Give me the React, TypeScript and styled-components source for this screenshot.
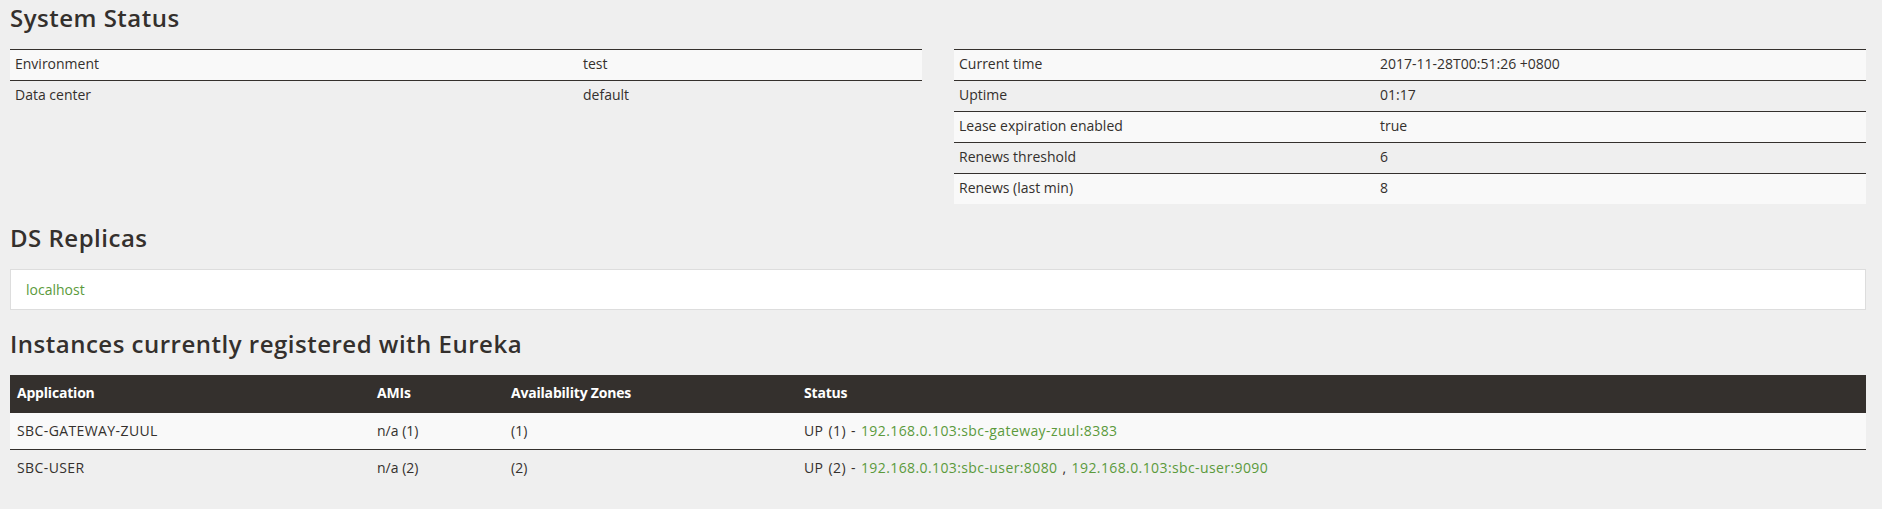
import React from 'react';
import styled, { createGlobalStyle } from 'styled-components';

const GlobalStyle = createGlobalStyle`
  body {
    margin: 0;
    background-color: #efefef;
    color: #34302d;
    font-family: "Open Sans", "Liberation Sans", sans-serif;
    font-size: 14px;
    line-height: 20px;
  }
`;

const StyledPage = styled.div`
  padding: 3px 16px 20px 10px;
`;

const StyledSection = styled.section`
  & + & {
    margin-top: 19px;
  }
`;

const StyledHeading = styled.h2`
  margin: 0 0 16px;
  font-size: 24px;
  line-height: 30px;
  font-weight: 600;
  letter-spacing: 0.5px;
`;

const StyledStatusGrid = styled.div`
  display: grid;
  grid-template-columns: 1fr 1fr;
  column-gap: 32px;
  align-items: start;
`;

const StyledTable = styled.table`
  width: 100%;
  border-collapse: collapse;
  table-layout: fixed;
`;

const StyledInfoRow = styled.tr`
  &:nth-child(odd) > td {
    background-color: #f9f9f9;
  }
`;

const StyledInfoCell = styled.td`
  padding: 4px 5px 6px;
  border-top: 1px solid #34302d;
  vertical-align: top;
`;

const StyledReplicaBox = styled.ul`
  margin: 0;
  padding: 10px 15px 9px;
  list-style: none;
  background-color: #ffffff;
  border: 1px solid #dddddd;
`;

const StyledLink = styled.a`
  color: #5b9a3c;
  text-decoration: none;
`;

const StyledHeadCell = styled.th`
  padding: 8px 7px;
  background-color: #34302d;
  color: #ffffff;
  font-weight: 700;
  text-align: left;
  letter-spacing: -0.2px;
  border-bottom: 2px solid #34302d;
`;

const StyledInstanceRow = styled.tr`
  &:nth-child(odd) > td {
    background-color: #f9f9f9;
  }
`;

const StyledInstanceCell = styled.td<{ $wide?: boolean }>`
  padding: 8px 7px;
  border-top: 1px solid #34302d;
  vertical-align: top;
  letter-spacing: ${ ({ $wide }) => ($wide ? '0.4px' : 'normal') };
  word-spacing: ${ ({ $wide }) => ($wide ? '1px' : 'normal') };
`;

type InfoItem = { label: string; value: string };

const leftInfo: InfoItem[] = [
  { label: 'Environment', value: 'test' },
  { label: 'Data center', value: 'default' },
];

const rightInfo: InfoItem[] = [
  { label: 'Current time', value: '2017-11-28T00:51:26 +0800' },
  { label: 'Uptime', value: '01:17' },
  { label: 'Lease expiration enabled', value: 'true' },
  { label: 'Renews threshold', value: '6' },
  { label: 'Renews (last min)', value: '8' },
];

const instances = [
  {
    name: 'SBC-GATEWAY-ZUUL',
    amis: 'n/a (1)',
    zones: '(1)',
    status: 'UP (1)',
    links: ['192.168.0.103:sbc-gateway-zuul:8383'],
  },
  {
    name: 'SBC-USER',
    amis: 'n/a (2)',
    zones: '(2)',
    status: 'UP (2)',
    links: ['192.168.0.103:sbc-user:8080', '192.168.0.103:sbc-user:9090'],
  },
];

const InfoTable = ({ items, keyWidth }: { items: InfoItem[]; keyWidth: number }) => (
  <StyledTable>
    <colgroup>
      <col style={ { width: keyWidth } } />
      <col />
    </colgroup>
    <tbody>
      {items.map((item) => (
        <StyledInfoRow key={ item.label }>
          <StyledInfoCell>{item.label}</StyledInfoCell>
          <StyledInfoCell>{item.value}</StyledInfoCell>
        </StyledInfoRow>
      ))}
    </tbody>
  </StyledTable>
);

const App = () => (
  <StyledPage>
    <GlobalStyle />
    <StyledSection>
      <StyledHeading>System Status</StyledHeading>
      <StyledStatusGrid>
        <InfoTable items={ leftInfo } keyWidth={ 568 } />
        <InfoTable items={ rightInfo } keyWidth={ 421 } />
      </StyledStatusGrid>
    </StyledSection>
    <StyledSection>
      <StyledHeading>DS Replicas</StyledHeading>
      <StyledReplicaBox>
        <li>
          <StyledLink href="#">localhost</StyledLink>
        </li>
      </StyledReplicaBox>
    </StyledSection>
    <StyledSection>
      <StyledHeading>Instances currently registered with Eureka</StyledHeading>
      <StyledTable>
        <colgroup>
          <col style={ { width: 360 } } />
          <col style={ { width: 134 } } />
          <col style={ { width: 293 } } />
          <col />
        </colgroup>
        <thead>
          <tr>
            <StyledHeadCell>Application</StyledHeadCell>
            <StyledHeadCell>AMIs</StyledHeadCell>
            <StyledHeadCell>Availability Zones</StyledHeadCell>
            <StyledHeadCell>Status</StyledHeadCell>
          </tr>
        </thead>
        <tbody>
          {instances.map((instance) => (
            <StyledInstanceRow key={ instance.name }>
              <StyledInstanceCell $wide>{instance.name}</StyledInstanceCell>
              <StyledInstanceCell>{instance.amis}</StyledInstanceCell>
              <StyledInstanceCell>{instance.zones}</StyledInstanceCell>
              <StyledInstanceCell $wide>
                {instance.status} -{' '}
                {instance.links.map((link, index) => (
                  <React.Fragment key={ link }>
                    {index > 0 && ' , '}
                    <StyledLink href="#">{link}</StyledLink>
                  </React.Fragment>
                ))}
              </StyledInstanceCell>
            </StyledInstanceRow>
          ))}
        </tbody>
      </StyledTable>
    </StyledSection>
  </StyledPage>
);

export default App;
